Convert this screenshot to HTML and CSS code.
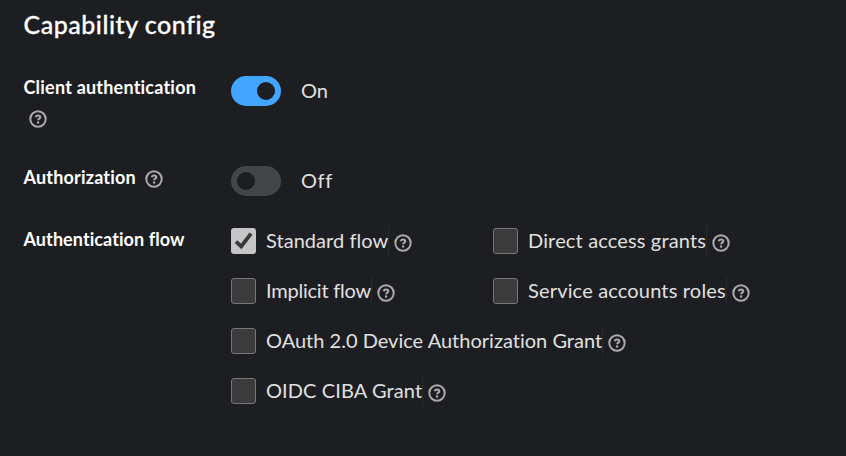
FILE: index.html
```html
<!DOCTYPE html>
<html lang="en">
<head>
<meta charset="utf-8">
<title>Capability config</title>
<link rel="stylesheet" href="styles.css">
</head>
<body>
<svg class="defs" aria-hidden="true">
  <symbol id="help" viewBox="0 0 18 18">
    <circle cx="9" cy="9" r="7.7" fill="none" stroke="currentColor" stroke-width="2"/>
    <path d="M6.6 7.3C7 6.1 7.9 5.6 9.1 5.6C10.5 5.6 11.3 6.2 11.3 7.2C11.3 8.6 9.1 8.7 9.1 10.2" fill="none" stroke="currentColor" stroke-width="2"/>
    <circle cx="9.1" cy="12.5" r="1.2" fill="currentColor"/>
  </symbol>
</svg>
<main class="panel">
  <h1 class="title">Capability config</h1>
  <form class="form">
    <div class="row row-client">
      <div class="label"><span class="t-client">Client authentication</span><svg class="help help-wrapped"><use href="#help"/></svg></div>
      <div class="switch-field"><span class="switch on"></span><span class="state t-on">On</span></div>
    </div>
    <div class="row row-authz">
      <div class="label"><span class="t-authz">Authorization</span><svg class="help"><use href="#help"/></svg></div>
      <div class="switch-field"><span class="switch"></span><span class="state t-off">Off</span></div>
    </div>
    <div class="row">
      <div class="label label-flow"><span class="t-flow">Authentication flow</span></div>
      <div class="flows">
        <div class="check"><span class="box checked"><svg viewBox="0 0 25 26"><path d="M5 13.6L10.2 18.4L20 5.6" fill="none" stroke="#393939" stroke-width="3.8"/></svg></span><span class="name t-standard">Standard flow</span><svg class="help"><use href="#help"/></svg></div>
        <div class="check"><span class="box"></span><span class="name t-direct">Direct access grants</span><svg class="help"><use href="#help"/></svg></div>
        <div class="check"><span class="box"></span><span class="name t-implicit">Implicit flow</span><svg class="help"><use href="#help"/></svg></div>
        <div class="check"><span class="box"></span><span class="name t-service">Service accounts roles</span><svg class="help"><use href="#help"/></svg></div>
        <div class="check wide"><span class="box"></span><span class="name t-device">OAuth 2.0 Device Authorization Grant</span><svg class="help"><use href="#help"/></svg></div>
        <div class="check wide"><span class="box"></span><span class="name t-ciba">OIDC CIBA Grant</span><svg class="help"><use href="#help"/></svg></div>
      </div>
    </div>
  </form>
</main>
</body>
</html>
```
FILE: styles.css
```css
* { box-sizing: border-box; }
body {
  margin: 0;
  background: #1d1e21;
  color: #e0e0e0;
  font: 20px/30px Lato, "Open Sans", sans-serif;
  font-variant-ligatures: none;
  white-space: nowrap;
}
.defs { display: none; }
.panel { height: 456px; padding: 9px 24px 0 23.5px; overflow: hidden; }
.title { margin: 0; color: #fff; font-size: 25px; font-weight: 500; line-height: 30px; letter-spacing: 0.52px; -webkit-text-stroke: 0.3px #fff; }
.form { margin-top: 37px; }
.row { display: grid; grid-template-columns: 207.5px 1fr; }
.row-client { height: 90px; }
.row-authz { height: 60px; }
.label { display: flex; flex-wrap: wrap; align-content: flex-start; align-items: center; column-gap: 9px; height: 26px; padding-right: 20px; color: #fff; font-size: 18px; font-weight: 700; line-height: 22px; }
.label-flow { padding-top: 2px; }
.label .help { margin-top: 4px; }
.label .help-wrapped { margin: 12px 0 0 5px; }
.help { width: 18px; height: 18px; color: #aaa; flex: none; }
.switch-field { display: flex; gap: 20px; height: 30px; align-items: center; }
.state { height: 32px; }
.switch { display: flex; align-items: center; width: 50px; height: 30px; padding: 0 6px; border-radius: 15px; background: #444548; }
.switch::before { content: ""; width: 18px; height: 18px; border-radius: 50%; background: #1d1e21; }
.switch.on { justify-content: flex-end; background: #42a5ff; }
.flows { display: grid; grid-template-columns: 262px 1fr; grid-auto-rows: 30px; row-gap: 20px; }
.check { display: flex; align-items: center; }
.wide { grid-column: 1 / -1; }
.box { width: 25px; height: 26px; margin-right: 10px; border: 1px solid #777; border-radius: 3px; background: #3b3b3b; flex: none; }
.box.checked { border: 0; background: #c6c6c6; }
.box svg { display: block; width: 25px; height: 26px; }
.name { height: 30px; line-height: 28px; border-right: 1px solid #292a2c; }
.check .help { margin: 4px 0 0 5px; }
.t-client { letter-spacing: 0.21px; }
.t-authz { letter-spacing: 0.18px; }
.t-flow { letter-spacing: 0.08px; }
.t-off { letter-spacing: 0.6px; }
.t-standard { letter-spacing: 0.05px; }
.t-direct { letter-spacing: 0.15px; }
.t-implicit { letter-spacing: -0.22px; }
.t-service { letter-spacing: 0.17px; }
.t-device { letter-spacing: 0.01px; }
.t-ciba { letter-spacing: 0.1px; }
```
